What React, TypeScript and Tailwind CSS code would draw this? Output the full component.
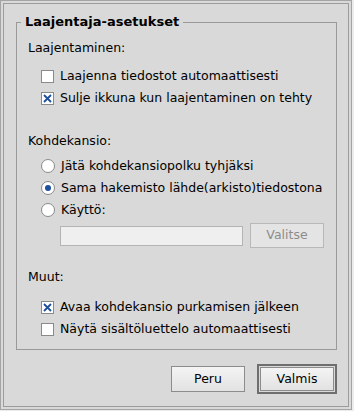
import React from 'react';

function CheckBox({ checked }: { checked?: boolean }) {
  return (
    <span className="w-[13px] h-[13px] border border-[#8a8a8a] bg-white flex items-center justify-center shrink-0">
      {checked && (
        <svg width="9" height="9" viewBox="0 0 9 9">
          <path d="M1 1L8 8M8 1L1 8" stroke="#1c4f9c" strokeWidth="1.8" />
        </svg>
      )}
    </span>
  );
}

function Radio({ checked }: { checked?: boolean }) {
  return (
    <span className="w-[14px] h-[14px] rounded-full border border-[#8a8a8a] bg-white flex items-center justify-center shrink-0">
      {checked && <span className="w-[6px] h-[6px] rounded-full bg-[#1c4f9c]" />}
    </span>
  );
}

function Row({ children, control }: { children: React.ReactNode; control: React.ReactNode }) {
  return (
    <div className="flex items-center gap-[6px] h-[22px] pl-[20px]">
      {control}
      <span>{children}</span>
    </div>
  );
}

export default function App() {
  return (
    <div className="w-[354px] h-[411px] bg-[#ececec]" style={{ fontFamily: '"DejaVu Sans", sans-serif' }}>
      <div className="w-[352px] h-[410px] border border-[#a4a4a4] bg-[#d9d9d9] p-[2px]">
        <div className="h-full border border-[#9c9c9c] pl-[12px] pr-[11px] flex flex-col text-[12.5px] text-black">
          <fieldset className="mt-[10px] border border-[#9a9a9a] pl-[4px] pb-[9px]">
            <legend className="px-[4px] font-bold text-[13px] leading-[16px]">Laajentaja-asetukset</legend>
            <div className="pl-[7px] mt-[7px] h-[22px] flex items-center">Laajentaminen:</div>
            <div className="mt-[6px]">
              <Row control={<CheckBox />}>Laajenna tiedostot automaattisesti</Row>
              <Row control={<CheckBox checked />}>Sulje ikkuna kun laajentaminen on tehty</Row>
            </div>
            <div className="pl-[7px] mt-[21px] h-[22px] flex items-center">Kohdekansio:</div>
            <div className="mt-[3px]">
              <Row control={<Radio />}>Jätä kohdekansiopolku tyhjäksi</Row>
              <Row control={<Radio checked />}>Sama hakemisto lähde(arkisto)tiedostona</Row>
              <Row control={<Radio />}>Käyttö:</Row>
            </div>
            <div className="flex items-center gap-[7px] pl-[39px] mt-[2px] h-[25px]">
              <div className="w-[183px] h-[20px] border border-[#b4b4b4] bg-[#efefef]" />
              <button className="w-[74px] h-[25px] border border-[#b8b8b8] bg-[#e4e4e4] text-[#8c8c8c]">Valitse</button>
            </div>
            <div className="pl-[7px] mt-[18px] h-[22px] flex items-center">Muut:</div>
            <div className="mt-[8px]">
              <Row control={<CheckBox checked />}>Avaa kohdekansio purkamisen jälkeen</Row>
              <Row control={<CheckBox />}>Näytä sisältöluettelo automaattisesti</Row>
            </div>
          </fieldset>
          <div className="flex justify-end items-center gap-[12px] mt-[14px]">
            <button className="w-[74px] h-[26px] border border-[#8c8c8c] bg-gradient-to-b from-[#f4f4f4] to-[#e2e2e2]">Peru</button>
            <div className="border-2 border-[#6e6e6e] p-[1px] bg-[#d9d9d9]">
              <button className="w-[74px] h-[24px] border border-[#8c8c8c] bg-gradient-to-b from-[#f4f4f4] to-[#e2e2e2] block">Valmis</button>
            </div>
          </div>
        </div>
      </div>
    </div>
  );
}
